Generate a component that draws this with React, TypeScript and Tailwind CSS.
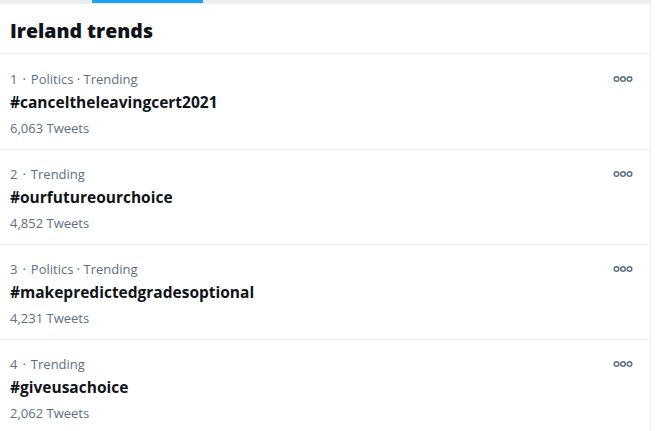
import React from "react";

const trends = [
  { n: 1, meta: "Politics · Trending", tag: "#canceltheleavingcert2021", count: "6,063 Tweets" },
  { n: 2, meta: "Trending", tag: "#ourfutureourchoice", count: "4,852 Tweets" },
  { n: 3, meta: "Politics · Trending", tag: "#makepredictedgradesoptional", count: "4,231 Tweets" },
  { n: 4, meta: "Trending", tag: "#giveusachoice", count: "2,062 Tweets" },
];

function Dots() {
  return (
    <svg width="20" height="8" viewBox="0 0 20 8" className="block">
      <circle cx="3.5" cy="4" r="2.3" fill="none" stroke="#5b7083" strokeWidth="1.5" />
      <circle cx="10" cy="4" r="2.3" fill="none" stroke="#5b7083" strokeWidth="1.5" />
      <circle cx="16.5" cy="4" r="2.3" fill="none" stroke="#5b7083" strokeWidth="1.5" />
    </svg>
  );
}

export default function App() {
  return (
    <div
      className="w-[655px] h-[431px] bg-white overflow-hidden"
      style={{ fontFamily: '"Open Sans", "Noto Sans", sans-serif' }}
    >
      <div className="w-[651px] h-full border-r border-[#ebeef0]">
        <div className="h-[4px] bg-[#ebeef0] relative">
          <div className="absolute left-[92px] top-0 w-[111px] h-[3px] bg-[#1da1f2]" />
        </div>
        <div className="pt-[15px] pb-[10px] pl-[10px] border-b border-[#ebeef0]">
          <div className="text-[19.5px] leading-[24px] font-extrabold text-[#0f1419]">Ireland trends</div>
        </div>
        {trends.map((t, i) => (
          <div
            key={t.n}
            className={`flex pl-[10px] pr-[17px] pb-[11px] border-b border-[#ebeef0] ${i === 0 ? "pt-[16px]" : "pt-[15px]"}`}
          >
            <div className="flex-1">
              <div className="text-[13px] leading-[18px] text-[#5b7083]">
                {t.n}
                <span className="px-[5px]">·</span>
                {t.meta}
              </div>
              <div className="mt-[4px] text-[15.5px] leading-[20px] font-bold text-[#0f1419]">{t.tag}</div>
              <div className="mt-[6px] text-[13px] leading-[20px] text-[#5b7083]">{t.count}</div>
            </div>
            <div className="pt-[5px]">
              <Dots />
            </div>
          </div>
        ))}
      </div>
    </div>
  );
}
